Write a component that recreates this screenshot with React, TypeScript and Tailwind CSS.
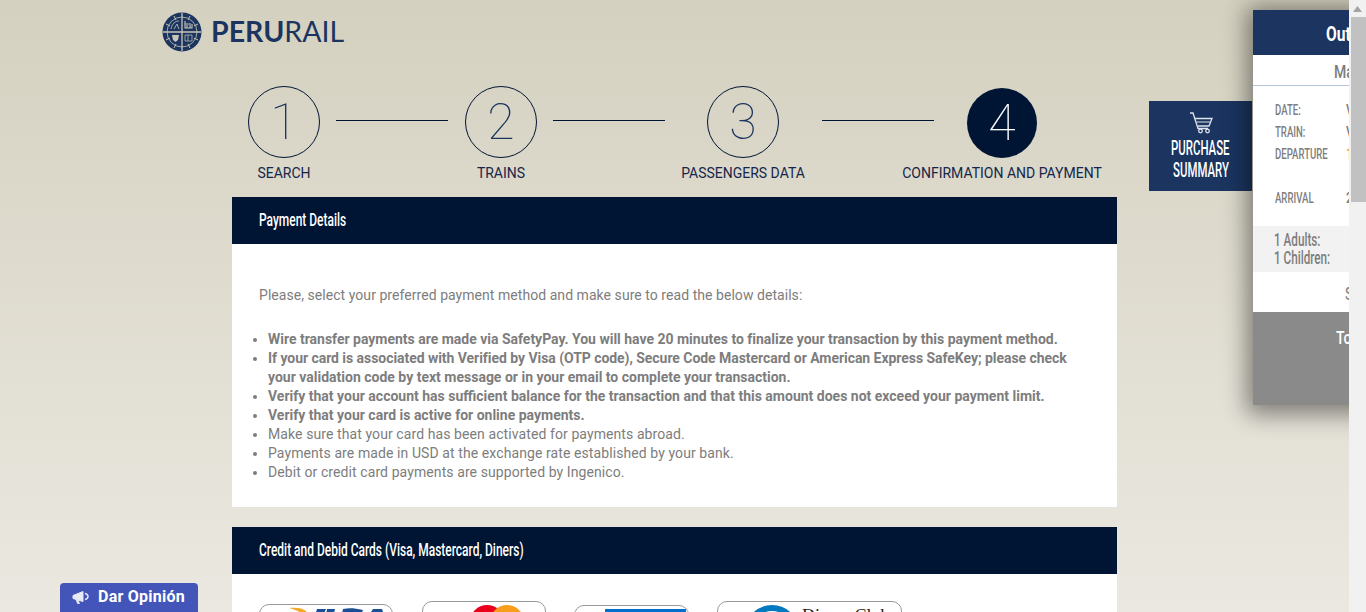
import React from "react";

const oswCls = "font-['Roboto',sans-serif]";

function Cond({ children, s = "scale-x-[0.78]", o = "origin-left", extra = "" }: { children: React.ReactNode; s?: string; o?: string; extra?: string }) {
  return <span className={`inline-block whitespace-nowrap ${s} ${o} ${oswCls} ${extra}`}>{children}</span>;
}

function Logo() {
  return (
    <svg width="40" height="40" viewBox="0 0 40 40">
      <circle cx="20" cy="20" r="19.500" fill="#1b3560" />
      <circle cx="20" cy="20" r="15" fill="#1b3560" stroke="#c8c6b6" strokeWidth="0.8" />
      <path d="M20 1v38M1 20h38" stroke="#c8c6b6" strokeWidth="1.300" />
      <path d="M4 12l4 2M36 12l-4 2M4 28l4-2M36 28l-4-2M12 4l2 4M28 4l-2 4M12 36l2-4M28 36l-2-4" stroke="#c8c6b6" strokeWidth="1" />
      <path d="M23 9v7h7v-4M23 12h6M25 16v-3M28 16v-3" stroke="#c8c6b6" strokeWidth="1.100" fill="none" />
      <path d="M9 17c1-5 4-8 8-8M12 17l3-5 2 5" stroke="#c8c6b6" strokeWidth="0.800" fill="none" />
      <path d="M10 23h7l-1 5-2.500 2-2.500-2z" fill="#c8c6b6" />
      <path d="M23 23h7v6h-7zM26 23v6" stroke="#c8c6b6" strokeWidth="0.700" fill="none" />
    </svg>
  );
}

function Step({ n, label, filled, cw, size, nudge = "" }: { n: number; label: string; filled?: boolean; cw: string; size: string; nudge?: string }) {
  return (
    <div className={`flex flex-col items-center ${cw}`}>
      <div className={`h-[74px] flex items-center justify-center ${nudge}`}>
        <div
          className={`${size} rounded-full flex items-center justify-center text-[50px] font-thin font-['Roboto',sans-serif] ${
            filled ? "bg-[#001434] text-white" : "border border-[#001434] text-[#1b3560]"
          }`}
        >
          {n}
        </div>
      </div>
      <div className={`text-[14px] leading-[18px] text-[#15264a] whitespace-nowrap ${nudge ? "mt-[4px]" : "mt-[5px]"}`}>{label}</div>
    </div>
  );
}

function Line() {
  return <div className="w-[112px] h-px bg-[#001434] mt-[35px] shrink-0" />;
}

function Head({ children }: { children: React.ReactNode }) {
  return (
    <div className="h-[47px] bg-[#001434] flex items-center pl-[27px] pb-[1px] text-white text-[19px] font-medium">
      <Cond s="scale-x-[0.63]">{children}</Cond>
    </div>
  );
}

function CardBox({ w, children }: { w: string; children?: React.ReactNode }) {
  return (
    <div className={`${w} h-[70px] border border-[#999] rounded-[10px] overflow-hidden shrink-0 relative`}>{children}</div>
  );
}

function Row({ k, top }: { k: string; top: string }) {
  return (
    <div className={`${top} text-[15px] leading-[22px] text-[#7d7d7d] font-medium`}>
      <Cond s="scale-x-[0.64]">{k}</Cond>
    </div>
  );
}

export default function App() {
  return (
    <div className="relative h-[612px] w-[1366px] overflow-hidden bg-gradient-to-b from-[#d5d1c0] to-[#ebe8e1] font-['Roboto',sans-serif]">
      <header className="flex items-center h-[63px] pl-[162px] gap-[9px]">
        <Logo />
        <div className="text-[28.5px] leading-none text-[#1b3560] font-['Lato',sans-serif]">
          <span className="font-bold">PERU</span>
          <span className="font-normal">RAIL</span>
        </div>
      </header>

      <div className="ml-[232px] w-[885px]">
        <div className="flex items-start h-[134px] pt-[22px] pl-[16px]">
          <Step n={1} label="SEARCH" cw="w-[72px]" size="w-[72px] h-[72px]" />
          <div className="w-[16px]" />
          <Line />
          <div className="w-[17px]" />
          <Step n={2} label="TRAINS" cw="w-[72px]" size="w-[72px] h-[72px]" />
          <div className="w-[16px]" />
          <Line />
          <div className="w-[42px]" />
          <Step n={3} label="PASSENGERS DATA" cw="w-[72px]" size="w-[72px] h-[72px]" />
          <div className="w-[43px]" />
          <Line />
          <div className="w-[33px]" />
          <Step n={4} label="CONFIRMATION AND PAYMENT" cw="w-[70px]" size="w-[70px] h-[70px]" nudge="mt-[1px]" filled />
        </div>

        <Head>Payment Details</Head>
        <div className="bg-white h-[263px] pl-[27px] pr-[20px] pt-[42px] text-[14px] leading-[19px] text-[#7d7d7d]">
          <p className="leading-[19px] tracking-[0.05px]">Please, select your preferred payment method and make sure to read the below details:</p>
          <ul className="list-disc pl-[9px] mt-[25px]">
            <li className="font-bold tracking-[-0.01px]">Wire transfer payments are made via SafetyPay. You will have 20 minutes to finalize your transaction by this payment method.</li>
            <li className="font-bold tracking-[-0.05px]">If your card is associated with Verified by Visa (OTP code), Secure Code Mastercard or American Express SafeKey; please check <span className="tracking-[0px]">your validation code by text message or in your email to complete your transaction.</span></li>
            <li className="font-bold">Verify that your account has sufficient balance for the transaction and that this amount does not exceed your payment limit.</li>
            <li className="font-bold">Verify that your card is active for online payments.</li>
            <li className="tracking-[0.09px]">Make sure that your card has been activated for payments abroad.</li>
            <li className="tracking-[0.09px]">Payments are made in USD at the exchange rate established by your bank.</li>
            <li className="tracking-[0.09px]">Debit or credit card payments are supported by Ingenico.</li>
          </ul>
        </div>

        <div className="h-[20px]" />
        <Head>Credit and Debid Cards (Visa, Mastercard, Diners)</Head>
        <div className="bg-white h-[60px] flex items-start pl-[27px] overflow-hidden">
          <div className="mt-[30px]">
            <CardBox w="w-[134px]">
              <svg className="absolute left-[28px] top-[2px]" width="102" height="20" viewBox="0 0 102 20">
                <path d="M1 1c7-1 14 0 17 3l3 8C16 7 9 3 1 1z" fill="#f3a829" />
                <path d="M29 2h9l-8 18h-6zM39 2h8l-4 18h-7zM55 2c6-1 11-1 20 1l-2 5c-5-1-9-2-11-1l-3 13h-8z" fill="#1a4f95" />
                <path d="M85 2h9l6 18h-8l-1-4h-7l-4 4h-7z" fill="#1a4f95" />
              </svg>
            </CardBox>
          </div>
          <div className="mt-[27px] ml-[29px]">
            <CardBox w="w-[124px]">
              <div className="absolute left-[47px] top-[3px] w-[34px] h-[34px] rounded-full bg-[#eb001b]" />
              <div className="absolute left-[67px] top-[3px] w-[34px] h-[34px] rounded-full bg-[#f79e1b]" />
            </CardBox>
          </div>
          <div className="mt-[31px] ml-[28px]">
            <CardBox w="w-[115px]">
              <div className="absolute left-[30px] top-[3px] w-[81px] h-[34px] bg-[#006fcf]" />
            </CardBox>
          </div>
          <div className="mt-[27px] ml-[28px]">
            <CardBox w="w-[185px]">
              <div className="absolute left-[27px] top-[3px] w-[54px] h-[54px] rounded-full border-[6px] border-[#0079be]" />
              <div className="absolute left-[84px] top-[4px] text-[18px] leading-[20px] text-[#222] font-['Liberation_Serif',serif] whitespace-nowrap">Diners Club</div>
            </CardBox>
          </div>
        </div>
      </div>

      {/* feedback tab */}
      <button className="absolute left-[60px] top-[583px] w-[138px] h-[40px] rounded-[4px] bg-[#4355b9] text-white flex items-start pt-[5px] pl-[12px] gap-[9px] text-[16px] font-bold leading-[18px] tracking-[0.25px]">
        <svg className="mt-[2px]" width="17" height="15" viewBox="0 0 17 15" fill="none" stroke="#e8eaf6">
          <path d="M1 5.500l10-4v10l-10-3z" fill="#e8eaf6" strokeWidth="1" />
          <path d="M4 9.500l1.500 4h2L6 10" fill="#e8eaf6" strokeWidth="0.800" />
          <path d="M13 3.500c2 .5 3 2 3 3s-1 2.500-3 3" strokeWidth="1.500" />
        </svg>
        Dar Opinión
      </button>

      {/* purchase summary */}
      <div className="absolute left-[1149px] top-[101px] w-[103px] h-[90px] bg-[#1b3560] text-white flex flex-col items-center pt-[10px]">
        <svg width="24" height="23" viewBox="0 0 24 23" fill="none" stroke="#dfe3ea" strokeWidth="1.300">
          <path d="M1 2h3l5 15.500h10" />
          <path d="M6 7.500h17l-3 7.500H9" />
          <path d="M7.500 11h14" strokeWidth="1" />
          <circle cx="11.500" cy="20" r="1.800" />
          <circle cx="18.500" cy="20" r="1.800" />
        </svg>
        <div className="mt-[3px] text-center text-[20px] leading-[22px] w-[103px] font-medium">
          <div><Cond s="scale-x-[0.57]" o="origin-center">PURCHASE</Cond></div>
          <div><Cond s="scale-x-[0.57]" o="origin-center">SUMMARY</Cond></div>
        </div>
      </div>

      <div className="absolute left-[1253px] top-[10px] w-[113px] h-[395px] bg-white shadow-[0_3px_22px_6px_rgba(0,0,0,0.45)] overflow-hidden">
        <div className="h-[45px] bg-[#1b3560] text-white font-bold text-[20px] pl-[73px] leading-[48px]">
          <Cond>Outward</Cond>
        </div>
        <div className="h-[31px] border-b border-[#b3c4d6] text-[#7d7d7d] text-[18px] pl-[81px] leading-[34px] font-medium">
          <Cond>Machu</Cond>
        </div>
        <div className="relative h-[140px] pl-[22px] pt-[13px]">
          <Row k="DATE:" top="" />
          <Row k="TRAIN:" top="" />
          <Row k="DEPARTURE" top="" />
          <Row k="ARRIVAL" top="mt-[22px]" />
          <div className="absolute left-[93px] top-[13px] text-[15px] leading-[22px] text-[#7d7d7d] font-medium">
            <Cond>V</Cond><br /><Cond>V</Cond><br /><Cond extra="text-[#e8a468]">1</Cond><br /><br /><Cond>2</Cond>
          </div>
        </div>
        <div className="h-[46px] bg-[#f2f2f2] pl-[21px] pt-[5px] text-[18px] leading-[18px] text-[#7d7d7d] font-medium">
          <div><Cond s="scale-x-[0.65]">1 Adults:</Cond></div>
          <div><Cond s="scale-x-[0.65]">1 Children:</Cond></div>
        </div>
        <div className="h-[40px] pl-[92px] leading-[44px] text-[18px] text-[#7d7d7d]">
          <Cond>Sub</Cond>
        </div>
        <div className="h-[93px] bg-[#8a8a8a] text-white pl-[83px] pt-[14px] text-[18px] leading-[24px] font-medium">
          <Cond>Total</Cond>
        </div>
      </div>

      {/* scrollbar */}
      <div className="absolute right-0 top-0 w-[17px] h-[612px] bg-[#f1f1f1]">
        <svg className="absolute left-[4px] top-[6px]" width="9" height="6" viewBox="0 0 9 6">
          <path d="M4.500 0L9 6H0z" fill="#a3a3a3" />
        </svg>
        <div className="mt-[17px] h-[185px] bg-[#c1c1c1] ml-[2px] w-[15px]" />
      </div>
    </div>
  );
}
